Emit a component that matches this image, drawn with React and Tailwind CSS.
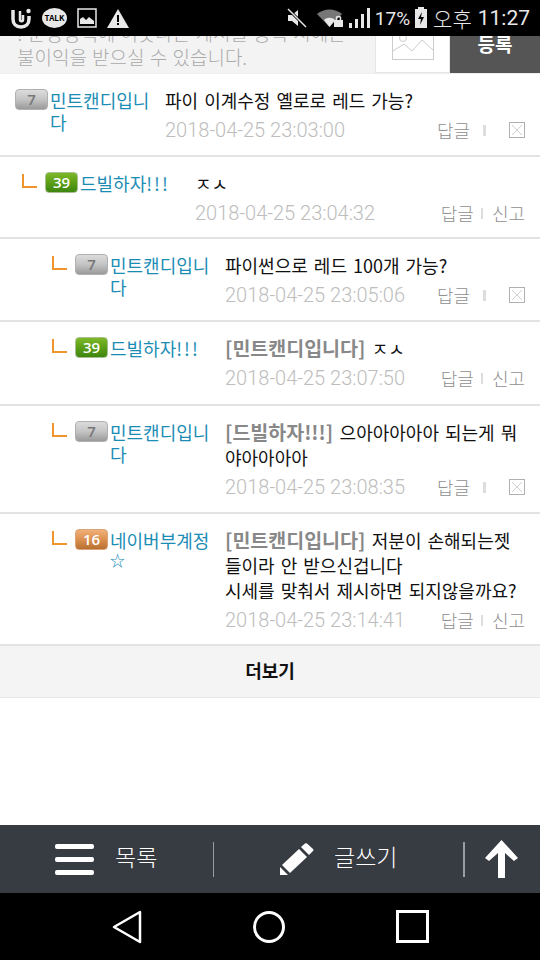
const F = { fontFamily: '"Noto Sans CJK KR","Noto Sans",sans-serif' };

function Badge({ n, tone }) {
  const cls = tone === 'gray'
    ? 'bg-linear-to-b from-[#dcdcdc] via-[#c4c4c4] to-[#9a9a9a] border-[#b0b0b0] text-[#777]'
    : tone === 'green'
    ? 'bg-linear-to-b from-[#7db828] via-[#5c9f16] to-[#3d860e] border-[#a9bf92] text-white'
    : 'bg-linear-to-b from-[#f0b078] via-[#dc9050] to-[#b87030] border-[#d8a478] text-white';
  return (
    <span className={`flex h-[21px] w-[33px] shrink-0 items-center justify-center rounded-[4px] border text-[15px] font-semibold leading-none ${cls}`} style={{ fontFamily: '"Open Sans",sans-serif' }}>
      {n}
    </span>
  );
}

function Arrow() {
  return (
    <svg width="15" height="14" viewBox="0 0 15 14" className="mr-[8px] mt-[2px] shrink-0">
      <path d="M1 0V13H15" fill="none" stroke="#f0952c" strokeWidth="2" />
    </svg>
  );
}

function XBox() {
  return (
    <svg width="16" height="16" viewBox="0 0 16 16" className="ml-[23px]">
      <rect x="0.5" y="0.5" width="15" height="15" fill="none" stroke="#b0b0b0" />
      <path d="M3 3L13 13M13 3L3 13" stroke="#cfcfcf" />
    </svg>
  );
}

function Row({ depth, n, tone, nick, children, date, own, h }) {
  const pad = depth === 0 ? 'pl-[15px]' : depth === 1 ? 'pl-[22px]' : 'pl-[52px]';
  return (
    <div className={`flex flex-col border-b-2 border-[#e3e3e3] pt-[15px] ${pad}`} style={{ height: h }}>
      <div className="flex flex-1">
        {depth > 0 && <Arrow />}
        <Badge n={n} tone={tone} />
        <div className="ml-[2px] w-[115px] shrink-0 pr-[12px] text-[18px] leading-[22px] text-[#1b8db5] break-all">{nick}</div>
        <div className="flex min-w-0 flex-1 flex-col pr-[15px]">
          <div className="mt-[-1px] break-all text-[18px] leading-[25px] text-[#111] [word-spacing:2px]">{children}</div>
          <div className="mt-[5px] flex items-center justify-between">
            <span className="text-[20px] leading-[24px] text-[#bdbdbd] [word-spacing:0]" style={{ fontFamily: 'Roboto,sans-serif', fontWeight: 300 }}>{date}</span>
            {own ? (
              <span className="flex items-center text-[18px] font-light leading-[24px] text-[#8f8f8f]">
                답글<span className="ml-[13px] h-[11px] w-[3px] bg-[#ddd]" /><XBox />
              </span>
            ) : (
              <span className="flex items-center text-[18px] font-light leading-[24px] text-[#8f8f8f]">
                답글<span className="ml-[7px] mr-[9px] h-[11px] w-[2px] bg-[#ddd]" />신고
              </span>
            )}
          </div>
        </div>
      </div>
    </div>
  );
}

const Q = ({ children }) => <b className="text-[19.5px] font-bold leading-none text-[#888]">[{children}] </b>;
const Bang = ({ t }) => <>{t}<span className="tracking-[2px]">!!!</span></>;

export default function App() {
  return (
    <div className="flex h-[960px] w-[540px] flex-col overflow-hidden bg-white" style={F}>
      {/* status bar */}
      <div className="z-10 flex h-[36px] shrink-0 items-center justify-between bg-black pl-[10px] pr-[10px] text-white">
        <div className="flex items-center gap-[10px]">
          <svg width="22" height="22" viewBox="0 0 22 22">
            <path d="M3 3V12C3 17 6 20 11 20C16 20 19 17 19 12V9" fill="none" stroke="#e8e8e8" strokeWidth="3.500" />
            <path d="M10 4V13C10 14.500 13 14.500 13 13V8" fill="none" stroke="#e8e8e8" strokeWidth="2.500" />
            <circle cx="18.500" cy="4" r="2.200" fill="#e8e8e8" />
          </svg>
          <span className="flex h-[20px] w-[25px] items-center justify-center rounded-[50%] bg-[#e8e8e8] text-[8px] font-bold leading-none text-black">TALK</span>
          <svg width="20" height="20" viewBox="0 0 20 20">
            <rect x="1" y="1" width="18" height="18" fill="none" stroke="#e8e8e8" strokeWidth="1.500" />
            <path d="M3 16V11L6 9L9 12L12 9L17 13V16Z" fill="#e8e8e8" />
          </svg>
          <svg width="22" height="20" viewBox="0 0 22 20">
            <path d="M11 1L22 20H0Z" fill="#e8e8e8" />
            <rect x="10" y="7" width="2" height="7" fill="#000" />
            <rect x="10" y="15" width="2" height="2" fill="#000" />
          </svg>
        </div>
        <div className="flex items-center text-[#e8e8e8]">
          <svg width="20" height="20" viewBox="0 0 20 20" className="mr-[10px]">
            <path d="M1 7H5L11 2V18L5 13H1Z" fill="#e8e8e8" />
            <path d="M1 1L19 19" stroke="#000" strokeWidth="3" />
            <path d="M1 1L19 19" stroke="#e8e8e8" strokeWidth="1.500" />
          </svg>
          <svg width="27" height="20" viewBox="0 0 27 20" className="mr-[4px]">
            <path d="M0 6C7 0 18 0 25 6L12.500 19Z" fill="#777" />
            <path d="M7 12C10 9 15 9 18 12L12.500 19Z" fill="#e8e8e8" />
            <rect x="17" y="12" width="9" height="7" fill="#e8e8e8" />
            <path d="M19.500 12V10C19.500 8 23.500 8 23.500 10V12" fill="none" stroke="#e8e8e8" strokeWidth="1.500" />
          </svg>
          <svg width="23" height="22" viewBox="0 0 23 22" className="mr-[4px]">
            <rect x="1" y="16" width="3" height="5" fill="#e8e8e8" />
            <rect x="7" y="12" width="3" height="9" fill="#e8e8e8" />
            <rect x="13" y="7" width="3" height="14" fill="#e8e8e8" />
            <rect x="19" y="1" width="3" height="20" fill="#e8e8e8" />
          </svg>
          <span className="text-[19px] leading-none" style={{ fontFamily: 'Roboto,sans-serif' }}>17%</span>
          <svg width="14" height="22" viewBox="0 0 14 22" className="ml-[4px] mr-[5px]">
            <rect x="4" y="0" width="6" height="3" fill="#e8e8e8" />
            <rect x="1" y="2" width="12" height="19" fill="#e8e8e8" />
            <path d="M8 5L4 12H7L6 18L10 10H7Z" fill="#000" />
          </svg>
          <span className="text-[21px] font-light leading-none">오후</span>
          <span className="ml-[6px] text-[21px] leading-none" style={{ fontFamily: 'Roboto,sans-serif' }}>11:27</span>
        </div>
      </div>

      {/* write form */}
      <div className="flex h-[38px] shrink-0 border-b border-[#eee] bg-[#f3f3f3]">
        <div className="flex min-w-0 flex-1 flex-col justify-end overflow-hidden pb-[4px] pl-[17px] text-[19px] font-light leading-[24px] text-[#aaa] [word-spacing:1px]">
          <div className="whitespace-nowrap">! 운영정책에 어긋나는 게시물 등록 시에는</div>
          <div className="whitespace-nowrap">불이익을 받으실 수 있습니다.</div>
        </div>
        <div className="flex w-[75px] shrink-0 items-center justify-center border-x border-b border-[#e6e6e6] bg-white">
          <svg width="42" height="28" viewBox="0 0 42 28" className="-mt-[17px]">
            <rect x="0.500" y="-4" width="41" height="31.500" fill="none" stroke="#ccc" />
            <circle cx="11" cy="6" r="3.500" fill="none" stroke="#ccc" />
            <path d="M1 19L12 12L20 19L30 8L41 18" fill="none" stroke="#ccc" />
          </svg>
        </div>
        <div className="flex w-[90px] shrink-0 items-start justify-center bg-[#555] text-[19px] font-bold leading-[16px] text-white">등록</div>
      </div>

      {/* comments */}
      <Row depth={0} n="7" tone="gray" nick="민트캔디입니다" date="2018-04-25 23:03:00" own h={83}>파이 이계수정 옐로로 레드 가능?</Row>
      <Row depth={1} n="39" tone="green" nick={<Bang t="드빌하자" />} date="2018-04-25 23:04:32" h={82}>ㅈㅅ</Row>
      <Row depth={2} n="7" tone="gray" nick="민트캔디입니다" date="2018-04-25 23:05:06" own h={83}>파이썬으로 레드 100개 가능?</Row>
      <Row depth={2} n="39" tone="green" nick={<Bang t="드빌하자" />} date="2018-04-25 23:07:50" h={84}><Q>민트캔디입니다</Q>ㅈㅅ</Row>
      <Row depth={2} n="7" tone="gray" nick="민트캔디입니다" date="2018-04-25 23:08:35" own h={108}><Q>드빌하자!!!</Q>으아아아아아 되는게 뭐야아아아아</Row>
      <Row depth={2} n="16" tone="orange" nick={<>네이버부계정<span className="align-[4px] text-[15px] leading-none">☆</span></>} date="2018-04-25 23:14:41" h={132}><Q>민트캔디입니다</Q>저분이 손해되는젯들이라 안 받으신겁니다<br />시세를 맞춰서 제시하면 되지않을까요?</Row>

      {/* more */}
      <div className="flex h-[52px] shrink-0 items-center justify-center border-b border-[#e6e6e6] bg-[#f4f4f4] pb-[2px] text-[18px] font-bold text-[#111]">더보기</div>

      <div className="flex-1" />

      {/* bottom toolbar */}
      <div className="flex h-[68px] shrink-0 items-center bg-[#373b42] text-white">
        <div className="flex h-[35px] w-[214px] items-center border-r border-[#9a9ca0] pl-[55px]">
          <div className="flex h-[31px] w-[39px] flex-col justify-between">
            <span className="h-[5px] rounded-[2px] bg-white" />
            <span className="h-[5px] rounded-[2px] bg-white" />
            <span className="h-[5px] rounded-[2px] bg-white" />
          </div>
          <span className="mb-[5px] ml-[21px] text-[23px] font-light leading-none">목록</span>
        </div>
        <div className="flex h-[35px] w-[251px] items-center border-r-2 border-[#9a9ca0] pl-[66px]">
          <svg width="34" height="32" viewBox="0 0 34 32">
            <path d="M2 22L19 6L27 14L10 30Z" fill="white" />
            <path d="M0 24L8 32H0Z" fill="white" />
            <path d="M21 4L25 0.500Q26 0 27 0.500L33 6Q34 7 33 8L29 12Z" fill="white" />
          </svg>
          <span className="mb-[5px] ml-[20px] text-[23px] font-light leading-none">글쓰기</span>
        </div>
        <svg width="33" height="38" viewBox="0 0 33 38" className="ml-[20px]">
          <path d="M16.500 0L33 18L29 21L20 13V38H13V13L4 21L0 18Z" fill="white" />
        </svg>
      </div>

      {/* nav bar */}
      <div className="flex h-[67px] shrink-0 items-center bg-black">
        <svg width="30" height="34" viewBox="0 0 30 34" className="ml-[112px]">
          <path d="M28 2V32L2 17Z" fill="none" stroke="white" strokeWidth="2.500" strokeLinejoin="round" />
        </svg>
        <svg width="32" height="32" viewBox="0 0 32 32" className="ml-[111px]">
          <circle cx="16" cy="16" r="14.500" fill="none" stroke="white" strokeWidth="3" />
        </svg>
        <svg width="33" height="33" viewBox="0 0 33 33" className="ml-[111px]">
          <rect x="1.500" y="1.500" width="30" height="30" fill="none" stroke="white" strokeWidth="3" />
        </svg>
      </div>
    </div>
  );
}
